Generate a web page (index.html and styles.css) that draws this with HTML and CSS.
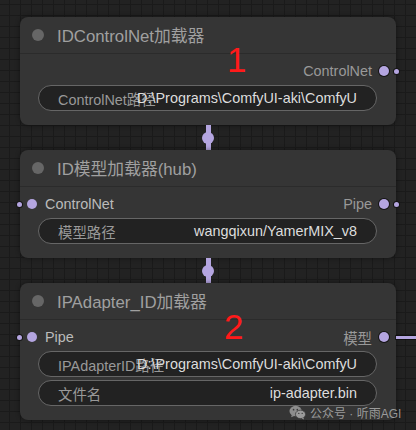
FILE: index.html
```html
<!DOCTYPE html>
<html lang="zh">
<head>
  <meta charset="UTF-8">
  <meta name="viewport" content="width=device-width, initial-scale=1.0">
  <title>ComfyUI | IPAdapter ID nodes</title>
  <link rel="stylesheet" href="styles.css">
</head>
<body>
  <main class="canvas">
    <section class="node">
      <header class="node__title"><span class="node__dot"></span>IDControlNet加载器</header>
      <div class="node__body">
        <div class="slots">
          <span class="slot slot--out">ControlNet<i class="pin"></i></span>
        </div>
        <div class="widget">
          <span class="widget__label">ControlNet路径</span>
          <span class="widget__value">D:\Programs\ComfyUI-aki\ComfyU</span>
        </div>
      </div>
      <span class="mark mark--one">1</span>
      <span class="stub stub--right stub--row1"></span>
    </section>

    <div class="link"><span class="link__bulb"></span></div>

    <section class="node">
      <header class="node__title"><span class="node__dot"></span>ID模型加载器(hub)</header>
      <div class="node__body">
        <div class="slots">
          <span class="slot slot--in"><i class="pin"></i>ControlNet</span>
          <span class="slot slot--out">Pipe<i class="pin"></i></span>
        </div>
        <div class="widget">
          <span class="widget__label">模型路径</span>
          <span class="widget__value">wangqixun/YamerMIX_v8</span>
        </div>
      </div>
      <span class="stub stub--left stub--row1"></span>
      <span class="stub stub--right stub--row1"></span>
    </section>

    <div class="link"><span class="link__bulb"></span></div>

    <section class="node">
      <header class="node__title"><span class="node__dot"></span>IPAdapter_ID加载器</header>
      <div class="node__body">
        <div class="slots">
          <span class="slot slot--in"><i class="pin"></i>Pipe</span>
          <span class="slot slot--out">模型<i class="pin"></i></span>
        </div>
        <div class="widget">
          <span class="widget__label">IPAdapterID路径</span>
          <span class="widget__value">D:\Programs\ComfyUI-aki\ComfyU</span>
        </div>
        <div class="widget">
          <span class="widget__label">文件名</span>
          <span class="widget__value">ip-adapter.bin</span>
        </div>
      </div>
      <span class="mark mark--two">2</span>
      <span class="stub stub--left stub--row1"></span>
      <span class="wire"></span>
    </section>

    <div class="watermark">
      <svg class="watermark__icon" width="17" height="15" viewBox="0 0 18 16">
        <ellipse cx="7" cy="6.5" rx="6.6" ry="5.6" fill="#8d8d8d"/>
        <path d="M3 10.5 L2.2 13 L5.4 11.6 Z" fill="#8d8d8d"/>
        <ellipse cx="12.2" cy="10" rx="5.4" ry="4.5" fill="#9a9a9a" stroke="#3a3a3a" stroke-width="0.8"/>
        <path d="M15.2 13.4 L16 15.4 L13.6 14.3 Z" fill="#9a9a9a"/>
        <circle cx="4.8" cy="5" r="0.9" fill="#3a3a3a"/>
        <circle cx="8.8" cy="5" r="0.9" fill="#3a3a3a"/>
        <circle cx="10.4" cy="9" r="0.7" fill="#3a3a3a"/>
        <circle cx="14" cy="9" r="0.7" fill="#3a3a3a"/>
      </svg>
      <span>公众号 · 听雨AGI</span>
    </div>
  </main>
</body>
</html>
```

FILE: styles.css
```css
:root {
  --canvas: #222222;
  --grid: #1a1a1a;
  --node: #353535;
  --node-line: #2b2b2b;
  --widget: #222222;
  --widget-border: #666666;
  --text-dim: #999999;
  --text-lit: #bbbbbb;
  --value: #dddddd;
  --pin: #b4a5e0;
  --pin-dark: #151515;
  --dot: #666666;
}
html {
  font-family: 'Liberation Sans', Arial, 'Noto Sans CJK SC', sans-serif;
  background-color: var(--canvas);
}
body {
  margin: 0;
  height: 430px;
  overflow: hidden;
  background-color: var(--canvas);
  background-image:
    linear-gradient(to right, var(--grid) 1px, transparent 1px),
    linear-gradient(to bottom, var(--grid) 1px, transparent 1px);
  background-size: 11px 11px;
  background-position: 9px 4px;
}
.canvas {
  position: relative;
  display: flex;
  flex-direction: column;
  width: 376px;
  padding: 17px 0 0 20px;
}
.node {
  position: relative;
  background-color: var(--node);
  border-radius: 8px;
  box-shadow: 0 0 5px rgba(0, 0, 0, 0.45);
}
.node__title {
  display: flex;
  align-items: center;
  gap: 13px;
  height: 36px;
  padding-left: 12px;
  border-bottom: 1px solid var(--node-line);
  font-size: 16.8px;
  color: #a0a0a0;
  white-space: nowrap;
}
.node__dot {
  width: 12px;
  height: 12px;
  border-radius: 50%;
  background-color: var(--dot);
}
.node__body {
  display: flex;
  flex-direction: column;
  gap: 3px;
  padding: 7px 0 14px;
}
.slots {
  display: flex;
  align-items: center;
  height: 20px;
  padding: 0 7px;
  margin-bottom: 1px;
}
.slot {
  display: flex;
  align-items: center;
  font-size: 14.4px;
  white-space: nowrap;
}
.slot--in {
  gap: 8px;
  color: var(--text-lit);
}
.slot--out {
  gap: 7px;
  margin-left: auto;
  color: var(--text-dim);
}
.pin {
  display: block;
  width: 10px;
  height: 10px;
  border-radius: 50%;
  background-color: var(--pin);
  box-shadow: 0 0 0 1px var(--pin-dark);
}
.slot--in .pin {
  box-shadow: none;
}
.widget {
  display: grid;
  align-items: center;
  height: 24px;
  margin: 0 19px 0 18px;
  padding: 0 19px;
  border: 1px solid var(--widget-border);
  border-radius: 13px;
  background-color: var(--widget);
  font-size: 14.4px;
  white-space: nowrap;
}
.widget__label,
.widget__value {
  grid-area: 1 / 1;
}
.widget__label {
  justify-self: start;
  color: var(--text-dim);
}
.widget__value {
  justify-self: end;
  color: var(--value);
}
.mark {
  position: absolute;
  font-size: 35px;
  line-height: 1;
  color: #ff1a1a;
}
.mark--one {
  left: 207px;
  top: 25px;
}
.mark--two {
  left: 204px;
  top: 26px;
}
.stub {
  position: absolute;
  width: 5px;
  height: 5px;
  border-radius: 50%;
  background-color: var(--pin);
  box-shadow: 0 0 0 1px var(--pin-dark);
}
.stub--row1 {
  top: 52px;
}
.stub--left {
  left: -3px;
}
.stub--right {
  right: -3px;
}
.wire {
  position: absolute;
  top: 53px;
  left: 376px;
  width: 24px;
  height: 3px;
  background-color: var(--pin);
  box-shadow: 0 0 0 1px rgba(0, 0, 0, 0.5);
}
.link {
  position: relative;
  display: flex;
  justify-content: center;
  align-items: center;
  height: 25px;
}
.link::before {
  content: '';
  position: absolute;
  top: 0;
  bottom: 0;
  left: 50%;
  width: 5px;
  margin-left: -2.5px;
  background-color: var(--pin);
}
.link__bulb {
  position: relative;
  width: 12px;
  height: 12px;
  border-radius: 50%;
  background-color: var(--pin);
}
.watermark {
  position: absolute;
  left: 289px;
  top: 404px;
  display: flex;
  align-items: center;
  gap: 4px;
  font-size: 12px;
  color: rgba(190, 190, 190, 0.75);
  white-space: nowrap;
}
.watermark__icon {
  display: block;
}
```
